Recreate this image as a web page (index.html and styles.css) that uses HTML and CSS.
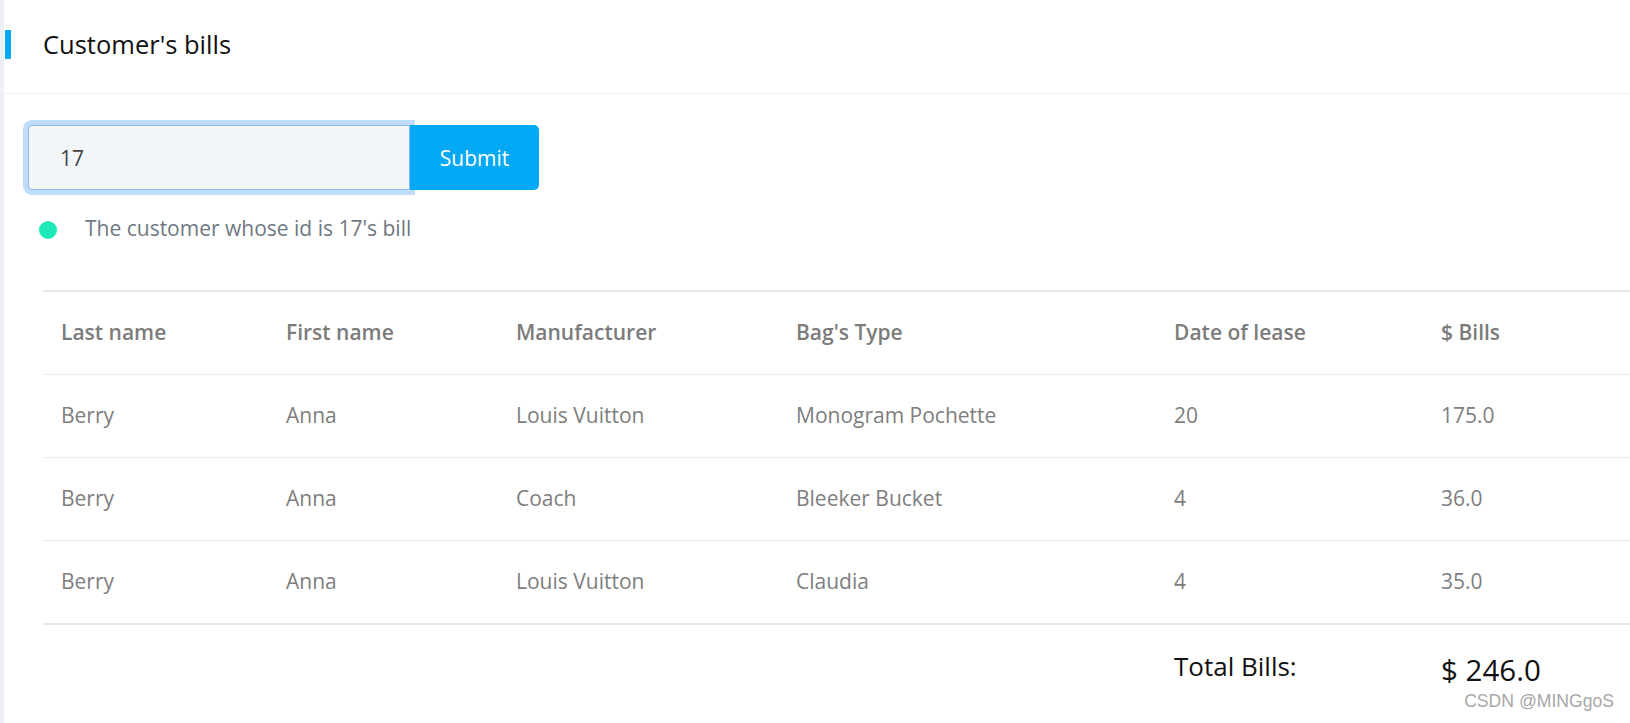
FILE: index.html
```html
<!DOCTYPE html>
<html lang="en">
<head>
<meta charset="utf-8">
<title>Customer's bills</title>
<link rel="stylesheet" href="styles.css">
</head>
<body>
<div class="app">
  <div class="rail"></div>
  <main class="main">
    <header class="page-head">
      <span class="head-bar"></span>
      <h1 class="head-title">Customer's bills</h1>
    </header>
    <section class="content">
      <form class="query">
        <input class="query-input" type="text" value="17">
        <button class="query-btn" type="button">Submit</button>
      </form>
      <div class="status">
        <span class="status-dot"></span>
        <span class="status-text">The customer whose id is 17's bill</span>
      </div>
      <table class="bills">
        <colgroup>
          <col class="c1"><col class="c2"><col class="c3"><col class="c4"><col class="c5"><col class="c6">
        </colgroup>
        <thead>
          <tr><th>Last name</th><th>First name</th><th>Manufacturer</th><th>Bag's Type</th><th>Date of lease</th><th>$ Bills</th></tr>
        </thead>
        <tbody>
          <tr><td>Berry</td><td>Anna</td><td>Louis Vuitton</td><td>Monogram Pochette</td><td>20</td><td>175.0</td></tr>
          <tr><td>Berry</td><td>Anna</td><td>Coach</td><td>Bleeker Bucket</td><td>4</td><td>36.0</td></tr>
          <tr><td>Berry</td><td>Anna</td><td>Louis Vuitton</td><td>Claudia</td><td>4</td><td>35.0</td></tr>
        </tbody>
        <tfoot>
          <tr><td colspan="4"></td><td class="total-label">Total Bills:</td><td class="total-value">$ 246.0</td></tr>
        </tfoot>
      </table>
    </section>
  </main>
</div>
<div class="watermark">CSDN @MINGgoS</div>
</body>
</html>
```
FILE: styles.css
```css
html, body {
  margin: 0;
  padding: 0;
  background: #ffffff;
}
body {
  font-family: "Open Sans", "Noto Sans", sans-serif;
  overflow: hidden;
  height: 723px;
}
.app {
  display: flex;
  min-height: 723px;
}
.rail {
  width: 4px;
  flex: 0 0 4px;
  background: #eceff3;
}
.main {
  flex: 1;
  min-width: 0;
  overflow: hidden;
}
.page-head {
  box-sizing: border-box;
  height: 94px;
  border-bottom: 1px solid #eeeeee;
  display: flex;
  align-items: flex-start;
  padding-top: 30px;
}
.head-bar {
  width: 6px;
  height: 29px;
  margin-left: 1px;
  background: #03a9f4;
}
.head-title {
  margin: 0 0 0 32px;
  font-size: 25.5px;
  font-weight: 400;
  color: #111111;
  line-height: 29px;
}
.content {
  padding: 31px 0 0 24px;
}
.query {
  display: flex;
  margin: 0;
}
.query-input {
  box-sizing: border-box;
  width: 382px;
  height: 65px;
  border: 1px solid #8cbaf0;
  border-radius: 4px 0 0 4px;
  background: #f3f6f9;
  box-shadow: 0 0 0 5px #bfdcfb;
  padding: 0 0 0 31px;
  font-family: "Open Sans", sans-serif;
  font-size: 21px;
  color: #444444;
  outline: none;
}
.query-btn {
  position: relative;
  width: 129px;
  height: 65px;
  border: none;
  border-radius: 0 5px 5px 0;
  background: #03a9f4;
  color: #ffffff;
  font-family: "Open Sans", sans-serif;
  font-size: 21px;
  padding: 0;
}
.status {
  display: flex;
  align-items: center;
  margin-top: 24px;
  height: 28px;
}
.status-dot {
  width: 18px;
  height: 18px;
  border-radius: 50%;
  background: #1de9b6;
  margin-left: 11px;
  margin-top: 4px;
}
.status-text {
  margin-left: 28px;
  font-size: 21px;
  color: #6e7882;
}
.bills {
  margin: 48px 0 0 15px;
  width: 1587px;
  border-collapse: collapse;
  table-layout: fixed;
}
.c1 { width: 225px; }
.c2 { width: 230px; }
.c3 { width: 280px; }
.c4 { width: 378px; }
.c5 { width: 267px; }
.c6 { width: 207px; }
.bills thead tr {
  border-top: 2px solid #e8e8e8;
}
.bills th, .bills td {
  text-align: left;
  padding: 0 0 1px 18px;
  height: 83px;
  box-sizing: border-box;
  vertical-align: middle;
  font-size: 21px;
  white-space: nowrap;
}
.bills th {
  font-weight: 600;
  color: #7c7c7c;
  border-bottom: 1px solid #ececec;
}
.bills tbody td {
  color: #7e7e7e;
  border-bottom: 1px solid #ececec;
}
.bills tbody tr:last-child td {
  height: 84px;
  border-bottom: 2px solid #e8e8e8;
}
.bills tfoot td {
  height: 84px;
  border: none;
  color: #111111;
}
.bills .total-label {
  font-size: 26px;
  padding-bottom: 2px;
}
.bills .total-value {
  font-size: 29.5px;
  padding-top: 6px;
  padding-bottom: 0;
}
.watermark {
  position: absolute;
  right: 16px;
  top: 691px;
  font-family: "Liberation Sans", Arial, sans-serif;
  font-size: 17.6px;
  color: #a8a8a8;
  text-shadow: 0 0 2px #ffffff;
}
```
